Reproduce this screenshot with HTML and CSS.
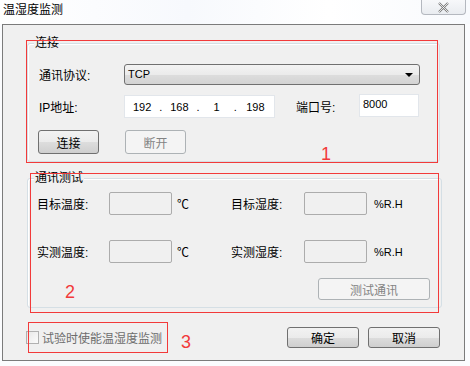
FILE: index.html
```html
<!DOCTYPE html>
<html>
  <head>
    <title>温湿度监测</title>
    <link rel="stylesheet" href="styles.css">
  </head>
  <body>
    <div class="titlebar">
      <span class="title">温湿度监测</span>
      <div class="close-btn">
        <svg width="13" height="11" viewBox="0 0 13 11">
          <path d="M2 1 L11 10 M11 1 L2 10" stroke="#7a7a7a" stroke-width="2.2" fill="none"/>
          <path d="M2 1 L11 10 M11 1 L2 10" stroke="#fff" stroke-width="0.8" fill="none"/>
        </svg>
      </div>
    </div>

    <div class="window">
      <!-- 连接 -->
      <div class="group group-conn">
        <span class="legend">连接</span>
        <div class="row row-proto">
          <span class="lbl lbl-wide">通讯协议:</span>
          <div class="combo">TCP<span class="arrow"></span></div>
        </div>
        <div class="row row-ip">
          <span class="lbl lbl-wide">IP地址:</span>
          <div class="ipbox">
            <div class="ip-field"><span class="num">192</span><span class="dot">.</span></div>
            <div class="ip-field"><span class="num">168</span><span class="dot">.</span></div>
            <div class="ip-field"><span class="num">1</span><span class="dot">.</span></div>
            <div class="ip-field"><span class="num">198</span></div>
          </div>
          <span class="lbl lbl-port">端口号:</span>
          <div class="textbox port">8000</div>
        </div>
        <div class="row row-btns">
          <button class="btn btn-small">连接</button>
          <button class="btn btn-small disabled">断开</button>
        </div>
      </div>

      <!-- 通讯测试 -->
      <div class="group group-test">
        <span class="legend">通讯测试</span>
        <div class="row row-val">
          <span class="lbl lbl-val">目标温度:</span>
          <div class="valbox"></div>
          <span class="unit unit-c">℃</span>
          <span class="lbl lbl-val2">目标湿度:</span>
          <div class="valbox"></div>
          <span class="unit unit-rh">%R.H</span>
        </div>
        <div class="row row-val row-val2">
          <span class="lbl lbl-val">实测温度:</span>
          <div class="valbox"></div>
          <span class="unit unit-c">℃</span>
          <span class="lbl lbl-val2">实测湿度:</span>
          <div class="valbox"></div>
          <span class="unit unit-rh">%R.H</span>
        </div>
        <div class="row row-test">
          <button class="btn btn-test disabled">测试通讯</button>
        </div>
      </div>

      <div class="footer">
        <label class="check disabled"><span class="checkbox"></span>试验时使能温湿度监测</label>
        <div class="footer-btns">
          <button class="btn btn-dlg">确定</button>
          <button class="btn btn-dlg">取消</button>
        </div>
      </div>
    </div>

    <!-- red annotations drawn over the dialog -->
    <div class="mark mark-1"></div>
    <div class="mark mark-2"></div>
    <div class="mark mark-3"></div>
    <span class="mark-num num-1">1</span>
    <span class="mark-num num-2">2</span>
    <span class="mark-num num-3">3</span>
  </body>
</html>
```

FILE: styles.css
```css
html, body {
  margin: 0;
  padding: 0;
}
body {
  width: 470px;
  height: 366px;
  overflow: hidden;
  position: relative;
  background: #fbfcfe;
  font-family: "Liberation Sans", "Noto Sans CJK SC", sans-serif;
  font-size: 12px;
  color: #000;
}

/* title bar */
.titlebar {
  height: 24px;
  display: flex;
  align-items: flex-start;
  justify-content: space-between;
  background: linear-gradient(to right, #ffffff, #f7f9fd 40%, #ffffff 70%, #f8fafd);
}
.title {
  margin: 3px 0 0 3px;
  line-height: 14px;
  font-size: 12px;
}
.close-btn {
  width: 43px;
  height: 14px;
  margin-right: 4px;
  border: 1px solid #b4b8bf;
  border-top: none;
  border-radius: 0 0 4px 4px;
  background: linear-gradient(#f7f8fa, #e9ecf0);
  display: flex;
  align-items: center;
  justify-content: center;
}

/* dialog body */
.window {
  margin-left: 2px;
  width: 463px;
  height: 337px;
  border: 1px solid #7b7b7b;
  background: #f0f0f0;
  padding: 18px 0 0 24px;
  box-sizing: border-box;
}

.group {
  position: relative;
  border: 1px solid #d5dfe5;
  box-shadow: inset 1px 1px 0 #fff;
  border-radius: 3px;
  box-sizing: border-box;
}
.legend {
  position: absolute;
  top: -7px;
  left: 6px;
  padding: 0 1px;
  line-height: 13px;
  background: #f0f0f0;
}
.group-conn {
  width: 413px;
  height: 119px;
  padding: 20px 0 0 11px;
}
.group-test {
  width: 415px;
  height: 130px;
  margin-top: 16px;
  padding: 13px 0 0 9px;
}

.row {
  display: flex;
  align-items: center;
}
.lbl {
  white-space: nowrap;
}
.lbl-wide {
  width: 85px;
}

/* protocol combo */
.combo {
  position: relative;
  width: 296px;
  height: 21px;
  box-sizing: border-box;
  border: 1px solid #707070;
  border-radius: 3px;
  background: linear-gradient(#f3f3f3, #ebebeb 50%, #dddddd 51%, #d3d3d3);
  padding-left: 3px;
  line-height: 19px;
  font-size: 11px;
}
.arrow {
  position: absolute;
  right: 6px;
  top: 8px;
  border-left: 4px solid transparent;
  border-right: 4px solid transparent;
  border-top: 4px solid #000;
}

/* ip row */
.row-ip {
  margin-top: 10px;
}
.ipbox {
  width: 151px;
  height: 23px;
  box-sizing: border-box;
  border: 1px solid #e2e6eb;
  background: #fff;
  display: flex;
  font-size: 11px;
}
.ip-field {
  flex: 1;
  display: flex;
  align-items: center;
}
.ip-field .num {
  flex: 1;
  text-align: center;
}
.ip-field .dot {
  width: 4px;
  margin-right: -1px;
}
.lbl-port {
  margin-left: 21px;
  width: 63px;
}
.textbox {
  box-sizing: border-box;
  border: 1px solid #e2e6eb;
  background: #fff;
  font-size: 11px;
}
.port {
  width: 60px;
  height: 23px;
  margin-top: -3px;
  padding: 3px 0 0 3px;
}

/* buttons */
.btn {
  box-sizing: border-box;
  border: 1px solid #707070;
  border-radius: 3px;
  background: linear-gradient(#f2f2f2, #ebebeb 50%, #dddddd 51%, #cfcfcf);
  font-family: "Liberation Sans", "Noto Sans CJK SC", sans-serif;
  font-size: 12px;
  color: #000;
  padding: 0;
}
.btn.disabled {
  border-color: #adb2b5;
  background: #f4f4f4;
  color: #838383;
}
.row-btns {
  margin-top: 12px;
  margin-left: -1px;
  gap: 26px;
}
.btn-small {
  width: 61px;
  height: 24px;
}

/* test group */
.lbl-val {
  width: 72px;
}
.valbox {
  width: 63px;
  height: 23px;
  box-sizing: border-box;
  border: 1px solid #acacac;
  border-radius: 2px;
  background: #f0f0f0;
}
.unit-c {
  width: 59px;
  padding-left: 5px;
  box-sizing: border-box;
}
.lbl-val2 {
  width: 73px;
}
.unit-rh {
  padding-left: 7px;
  font-size: 11px;
}
.row-val2 {
  margin-top: 25px;
}
.row-test {
  margin-top: 15px;
  justify-content: flex-end;
  padding-right: 11px;
}
.btn-test {
  width: 112px;
  height: 22px;
}

/* footer */
.footer {
  display: flex;
  align-items: center;
  justify-content: space-between;
  width: 413px;
  margin-top: 19px;
}
.check {
  display: flex;
  align-items: center;
  margin-left: -1px;
}
.check.disabled {
  color: #6d6d6d;
}
.checkbox {
  width: 13px;
  height: 13px;
  box-sizing: border-box;
  border: 1px solid #b1b1b1;
  background: linear-gradient(135deg, #e7e7e7, #fbfbfb);
  margin-right: 3px;
}
.footer-btns {
  display: flex;
  gap: 9px;
}
.btn-dlg {
  width: 72px;
  height: 21px;
}

/* red annotations */
.mark {
  position: absolute;
  border: 1px solid #f23a3a;
}
.mark-1 {
  left: 26px;
  top: 40px;
  width: 410px;
  height: 121px;
}
.mark-2 {
  left: 30px;
  top: 173px;
  width: 407px;
  height: 138px;
}
.mark-3 {
  left: 28px;
  top: 322px;
  width: 138px;
  height: 29px;
}
.mark-num {
  position: absolute;
  color: #f23a3a;
  font-family: "Liberation Sans", sans-serif;
  font-size: 18px;
  line-height: 18px;
}
.num-1 {
  left: 321px;
  top: 145px;
}
.num-2 {
  left: 65px;
  top: 283px;
}
.num-3 {
  left: 181px;
  top: 333px;
}
```
